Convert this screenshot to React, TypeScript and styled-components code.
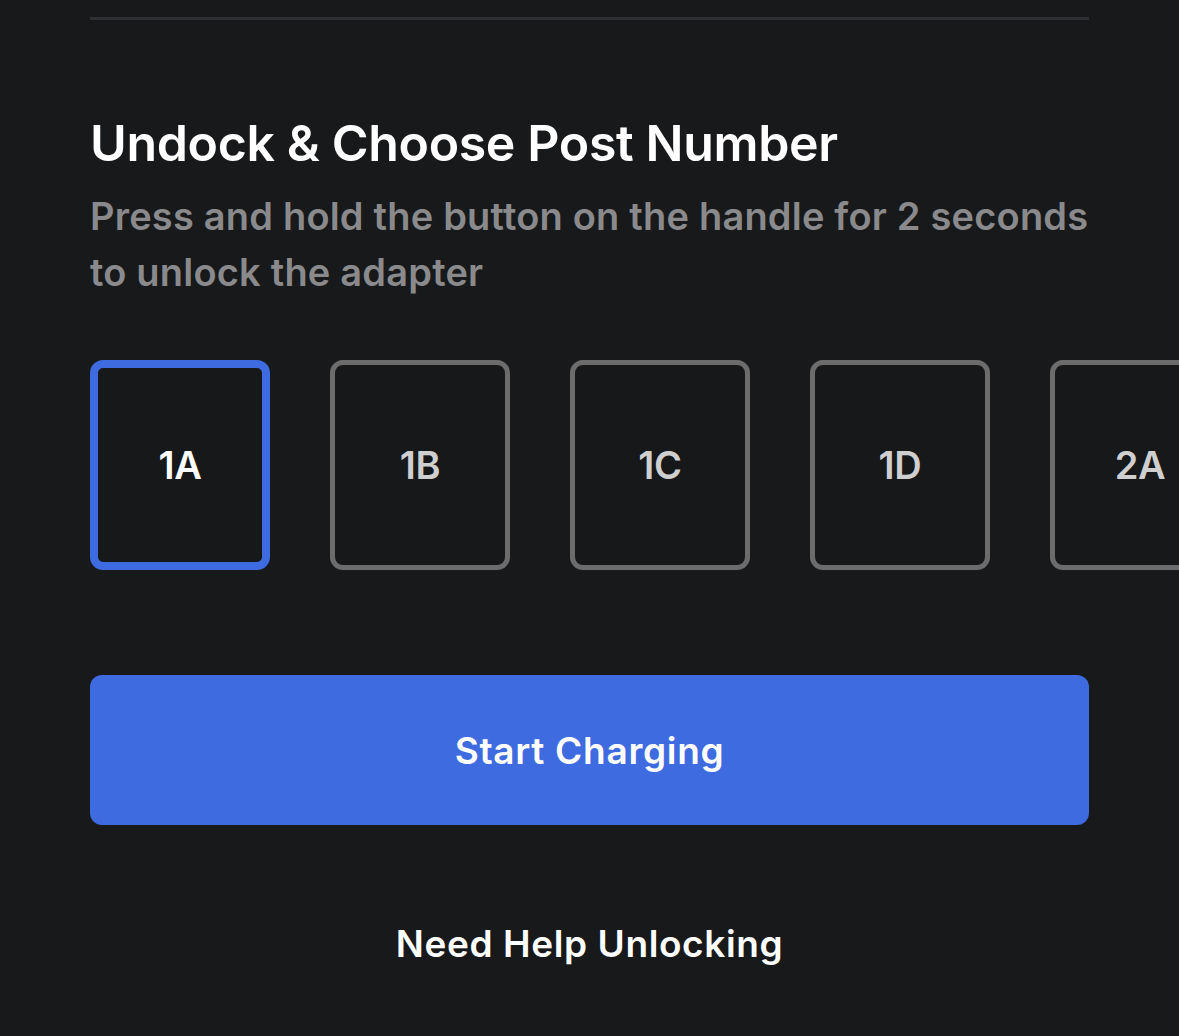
import styled, { createGlobalStyle } from 'styled-components';

const GlobalStyle = createGlobalStyle`
  html, body {
    margin: 0;
    padding: 0;
    background: #18191b;
    overflow: hidden;
  }
  body {
    font-family: Inter, 'Noto Sans', sans-serif;
    -webkit-font-smoothing: antialiased;
  }
`;

const posts = ['1A', '1B', '1C', '1D', '2A'];

const App = () => {
  const selected = '1A';

  return (
    <>
      <GlobalStyle />
      <Page>
        <Divider />
        <Title>Undock &amp; Choose Post Number</Title>
        <Subtitle>
          Press and hold the button on the handle for 2 seconds to unlock the adapter
        </Subtitle>
        <PostRow>
          {posts.map((post) => (
            <PostButton key={post} $active={post === selected}>
              {post}
            </PostButton>
          ))}
        </PostRow>
        <PrimaryButton>Start Charging</PrimaryButton>
        <HelpLink>Need Help Unlocking</HelpLink>
      </Page>
    </>
  );
};

const Page = styled.div`
  display: flex;
  flex-direction: column;
  padding: 17px 90px 0;
  height: 1036px;
  box-sizing: border-box;
`;

const Divider = styled.hr`
  margin: 0;
  border: none;
  height: 3px;
  width: 999px;
  background: #2f3033;
`;

const Title = styled.h1`
  margin: 93px 0 0;
  font-size: 50px;
  line-height: 61px;
  font-weight: 600;
  color: #ffffff;
  letter-spacing: -0.35px;
`;

const Subtitle = styled.p`
  margin: 14px 0 0;
  width: 1010px;
  font-size: 38px;
  line-height: 56px;
  font-weight: 600;
  letter-spacing: 0.2px;
  color: #8a8a8c;
`;

const PostRow = styled.div`
  display: flex;
  gap: 60px;
  margin: 60px -90px 0 0;
  overflow: hidden;
`;

const PostButton = styled.button<{ $active?: boolean }>`
  flex: 0 0 180px;
  height: 210px;
  box-sizing: border-box;
  display: flex;
  align-items: center;
  justify-content: center;
  background: #171819;
  border: ${(p) => (p.$active ? '8px solid #3e6be0' : '5px solid #6c6c6c')};
  border-radius: 13px;
  font-family: inherit;
  font-size: 38px;
  font-weight: 600;
  letter-spacing: -0.3px;
  color: ${(p) => (p.$active ? '#ffffff' : '#cfcfd0')};
  padding: 0;
  cursor: pointer;
`;

const PrimaryButton = styled.button`
  margin-top: 105px;
  width: 999px;
  height: 150px;
  border: none;
  border-radius: 12px;
  background: #3e6be0;
  color: #ffffff;
  font-family: inherit;
  font-size: 37px;
  font-weight: 600;
  letter-spacing: 0.7px;
  cursor: pointer;
`;

const HelpLink = styled.a`
  margin-top: 94px;
  align-self: center;
  width: 999px;
  text-align: center;
  font-size: 37px;
  line-height: 50px;
  font-weight: 600;
  letter-spacing: 0.6px;
  color: #ffffff;
  cursor: pointer;
`;

export default App;
